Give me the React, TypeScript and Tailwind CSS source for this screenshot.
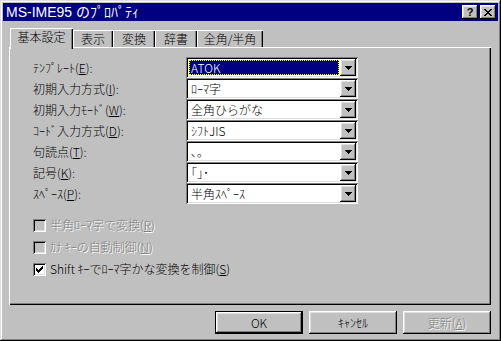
import React from "react";

const raised =
  "shadow-[inset_-1px_-1px_#000,inset_1px_1px_#fff,inset_-2px_-2px_#808080,inset_2px_2px_#dfdfdf]";
const sunken =
  "shadow-[inset_1px_1px_#808080,inset_-1px_-1px_#fff,inset_2px_2px_#000,inset_-2px_-2px_#dfdfdf]";
const disabledText = "text-[#808080] [text-shadow:1px_1px_0_#fff]";

function Arrow() {
  return (
    <svg width="7" height="4" viewBox="0 0 7 4" shapeRendering="crispEdges">
      <rect x="0" y="0" width="7" height="1" fill="#000" />
      <rect x="1" y="1" width="5" height="1" fill="#000" />
      <rect x="2" y="2" width="3" height="1" fill="#000" />
      <rect x="3" y="3" width="1" height="1" fill="#000" />
    </svg>
  );
}

function Check() {
  const px: [number, number][] = [
    [6, 0],
    [5, 1], [6, 1],
    [0, 2], [4, 2], [5, 2], [6, 2],
    [0, 3], [1, 3], [3, 3], [4, 3], [5, 3],
    [0, 4], [1, 4], [2, 4], [3, 4], [4, 4],
    [1, 5], [2, 5], [3, 5],
    [2, 6],
  ];
  return (
    <svg width="7" height="7" viewBox="0 0 7 7" shapeRendering="crispEdges">
      {px.map(([x, y], i) => (
        <rect key={i} x={x} y={y} width="1" height="1" fill="#000" />
      ))}
    </svg>
  );
}

function Combo({ value, selected }: { value: string; selected?: boolean }) {
  return (
    <div className={`w-[172px] h-[21px] bg-white p-[2px] flex ${sunken}`}>
      <div className="flex-1 p-[1px] flex">
        {selected ? (
          <div className="flex-1 bg-[#000080] border border-dotted border-[#ffff00] text-white flex items-center pl-[1px]">
            {value}
          </div>
        ) : (
          <div className="flex-1 text-black flex items-center pl-[2px]">{value}</div>
        )}
      </div>
      <div className={`w-[16px] h-[17px] bg-[#c0c0c0] flex items-center justify-center ${raised}`}>
        <Arrow />
      </div>
    </div>
  );
}

const rows = [
  { label: "ﾃﾝﾌﾟﾚｰﾄ", m: "E", value: "ATOK", selected: true },
  { label: "初期入力方式", m: "I", value: "ﾛｰﾏ字" },
  { label: "初期入力ﾓｰﾄﾞ", m: "W", value: "全角ひらがな" },
  { label: "ｺｰﾄﾞ入力方式", m: "D", value: "ｼﾌﾄJIS" },
  { label: "句読点", m: "T", value: "､｡" },
  { label: "記号", m: "K", value: "｢｣･" },
  { label: "ｽﾍﾟｰｽ", m: "P", value: "半角ｽﾍﾟｰｽ" },
];

const checks = [
  { label: "半角ﾛｰﾏ字で変換", m: "R", disabled: true, checked: false },
  { label: "ｶﾅ ｷｰの自動制御", m: "N", disabled: true, checked: false },
  { label: "Shift ｷｰでﾛｰﾏ字かな変換を制御", m: "S", disabled: false, checked: true },
];

const tabs = [
  { label: "表示", w: "w-[40px]" },
  { label: "変換", w: "w-[42px]" },
  { label: "辞書", w: "w-[42px]" },
  { label: "全角/半角", w: "w-[66px]" },
];

export default function App() {
  return (
    <div
      className={`w-[501px] h-[341px] bg-[#c0c0c0] p-[3px] flex flex-col text-[12px] leading-none font-light text-black font-['Noto_Sans_CJK_JP',sans-serif] ${"shadow-[inset_-1px_-1px_#000,inset_1px_1px_#dfdfdf,inset_-2px_-2px_#808080,inset_2px_2px_#fff]"}`}
    >
      {/* Title bar */}
      <div className="h-[18px] bg-[#000080] flex items-center pl-[3px] pr-[2px]">
        <span className="text-white text-[14px] leading-none font-normal font-['Liberation_Sans','Noto_Sans_CJK_JP',sans-serif]">
          MS-IME95 のﾌﾟﾛﾊﾟﾃｨ
        </span>
        <div className="ml-auto flex gap-[2px]">
          <div className={`w-[16px] h-[14px] bg-[#c0c0c0] flex items-center justify-center text-[11px] font-bold leading-none font-['Liberation_Sans',sans-serif] ${raised}`}>
            ?
          </div>
          <div className={`w-[16px] h-[14px] bg-[#c0c0c0] flex items-center justify-center ${raised}`}>
            <svg width="8" height="7" viewBox="0 0 8 7" shapeRendering="crispEdges">
              {[0, 1, 2, 3, 4, 5, 6].map((i) => (
                <React.Fragment key={i}>
                  <rect x={i} y={i} width="2" height="1" fill="#000" />
                  <rect x={6 - i} y={i} width="2" height="1" fill="#000" />
                </React.Fragment>
              ))}
            </svg>
          </div>
        </div>
      </div>

      {/* Tabs + panel */}
      <div className="pl-[6px] pr-[7px] pt-[7px]">
        <div className="h-[19px] flex items-end">
          <div
            className={`relative z-10 ml-[1px] w-[63px] h-[21px] -mb-[2px] bg-[#c0c0c0] flex items-start justify-center pt-[3px] shadow-[inset_1px_1px_#fff,inset_-1px_0_#000,inset_-2px_0_#808080]`}
          >
            基本設定
          </div>
          {tabs.map((t) => (
            <div
              key={t.label}
              className={`${t.w} h-[17px] bg-[#c0c0c0] flex items-center justify-center shadow-[inset_1px_1px_#fff,inset_-1px_0_#000,inset_-2px_0_#808080]`}
            >
              {t.label}
            </div>
          ))}
        </div>
        <div
          className={`h-[258px] bg-[#c0c0c0] pt-[10px] pl-[24px] shadow-[inset_1px_1px_#fff,inset_-1px_-1px_#000,inset_-2px_-2px_#808080]`}
        >
          <div className="flex flex-col">
            {rows.map((r) => (
              <div key={r.m} className="h-[21px] flex items-center">
                <div className="w-[153px]">
                  {r.label}(<u className="underline-offset-1">{r.m}</u>):
                </div>
                <Combo value={r.value} selected={r.selected} />
              </div>
            ))}
          </div>
          <div className="flex flex-col mt-[10px]">
            {checks.map((c) => (
              <div key={c.m} className="h-[22px] flex items-center gap-[4px]">
                <div
                  className={`w-[13px] h-[13px] flex items-center justify-center ${c.disabled ? "bg-[#c0c0c0]" : "bg-white"} ${sunken}`}
                >
                  {c.checked && <Check />}
                </div>
                <span className={c.disabled ? disabledText : ""}>
                  {c.label}(<u className="underline-offset-1">{c.m}</u>)
                </span>
              </div>
            ))}
          </div>
        </div>
      </div>

      {/* Buttons */}
      <div className="mt-[6px] pr-[7px] flex justify-end gap-[6px]">
        <div className="w-[88px] h-[23px] border border-black">
          <div className={`w-full h-full flex items-center justify-center ${raised}`}>OK</div>
        </div>
        <div className={`w-[88px] h-[23px] flex items-center justify-center ${raised}`}>ｷｬﾝｾﾙ</div>
        <div className={`w-[88px] h-[23px] flex items-center justify-center ${raised}`}>
          <span className={disabledText}>
            更新(<u className="underline-offset-1">A</u>)
          </span>
        </div>
      </div>
    </div>
  );
}
